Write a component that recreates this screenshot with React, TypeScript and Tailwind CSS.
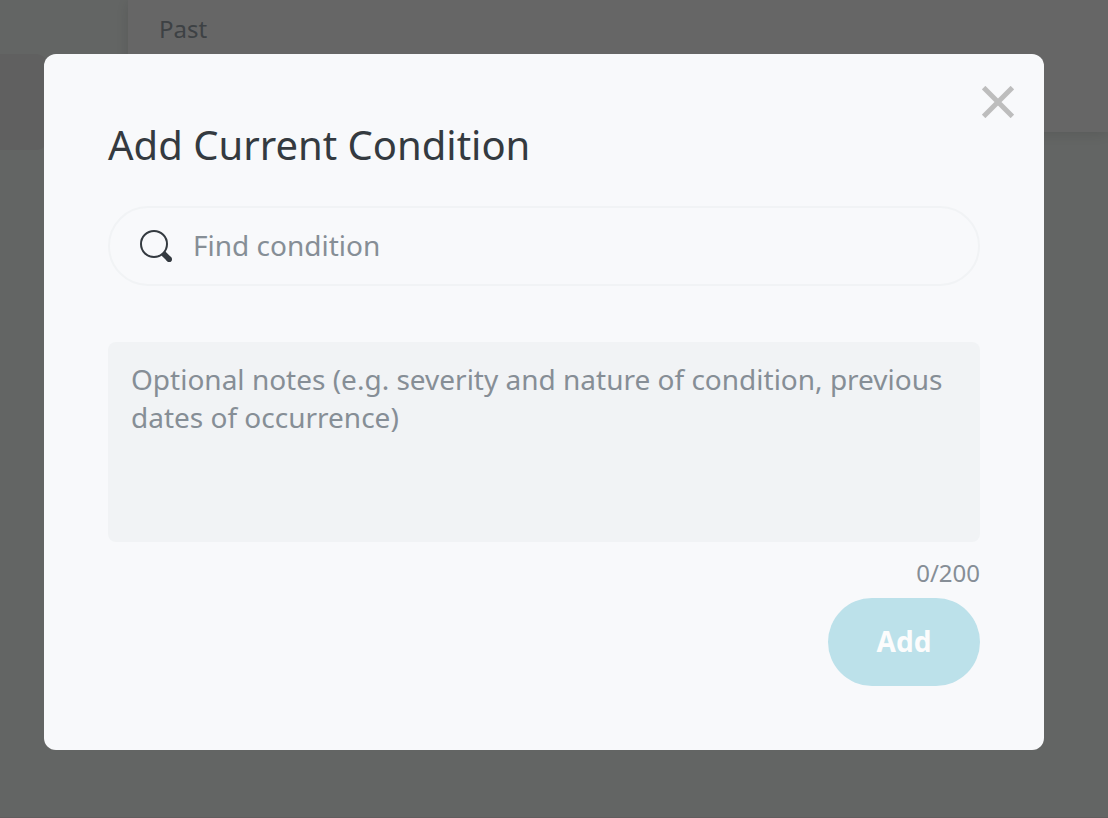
import { useState } from "react";

const MAX_NOTES = 200;

const CloseIcon = () => (
  <svg viewBox="0 0 32 32" className="size-8" fill="none" aria-hidden="true">
    <path d="M1.6 1.6 30.4 30.4M30.4 1.6 1.6 30.4" stroke="#bdbdbd" strokeWidth="5" />
  </svg>
);

const SearchIcon = () => (
  <svg viewBox="0 0 32 32" className="size-8 shrink-0" fill="none" aria-hidden="true">
    <circle cx="14" cy="14" r="13" stroke="#343a40" strokeWidth="2" />
    <path d="M23.4 23.6 29.2 29.2" stroke="#343a40" strokeWidth="5.6" />
    <circle cx="29.2" cy="29.2" r="2.8" fill="#343a40" />
  </svg>
);

// The page that sits behind the dialog
const PageBehind = () => {
  return (
    <div className="flex min-h-screen border-b border-[#f0e8ea] bg-[#f8fdfa]">
      <aside className="w-32 shrink-0 pt-[54px]">
        <div className="mr-20 h-24 rounded-r-xl bg-[#efefef]"></div>
      </aside>
      <main className="grow">
        <section className="h-33 bg-white pt-3 pl-[31px] shadow-[0_2px_14px_rgba(0,0,0,0.12)]">
          <h3 className="text-2xl leading-[34px] text-[#9aa3ab]">Past</h3>
        </section>
      </main>
    </div>
  );
};

const AddConditionDialog = () => {
  const [condition, setCondition] = useState("");
  const [notes, setNotes] = useState("");

  return (
    <div
      role="dialog"
      aria-modal="true"
      aria-labelledby="dialog-title"
      className="relative w-full max-w-[1000px] rounded-xl bg-[#f8f9fb] p-16"
    >
      <button type="button" aria-label="Close" className="absolute top-8 right-[30px] cursor-pointer">
        <CloseIcon />
      </button>
      <h2 id="dialog-title" className="text-[40px] leading-[54px] text-[#343a40]">
        Add Current Condition
      </h2>
      <label className="mt-[34px] flex h-20 items-center gap-[21px] rounded-full border-2 border-[#f1f3f5] px-[30px]">
        <SearchIcon />
        <input
          type="text"
          aria-label="Find condition"
          placeholder="Find condition"
          value={condition}
          onChange={(e) => setCondition(e.target.value)}
          className="w-full min-w-0 bg-transparent pb-0.5 text-[28px] text-[#343a40] outline-none placeholder:text-[#868e96]"
        />
      </label>
      <textarea
        aria-label="Optional notes"
        placeholder="Optional notes (e.g. severity and nature of condition, previous dates of occurrence)"
        maxLength={MAX_NOTES}
        value={notes}
        onChange={(e) => setNotes(e.target.value)}
        className="mt-14 block h-50 w-full resize-none rounded-lg bg-[#f1f3f5] px-[23px] py-[18px] text-[28px] leading-[38px] text-[#343a40] outline-none placeholder:text-[#868e96]"
      />
      <p className="mt-[14px] mb-2 text-right text-2xl leading-[34px] text-[#868e96]">
        {notes.length}/{MAX_NOTES}
      </p>
      <button
        type="button"
        className="ml-auto block h-22 min-w-38 cursor-pointer rounded-full bg-[#bce1ea] px-12 pb-0.5 text-[28px] font-bold text-[#fcfcfc]"
      >
        Add
      </button>
    </div>
  );
};

export default function App() {
  return (
    <div className="font-['Noto_Sans',sans-serif]">
      <PageBehind />
      <div className="fixed inset-0 flex items-start justify-center overflow-auto bg-black/60 pt-[54px] pr-16 pb-16 pl-11">
        <AddConditionDialog />
      </div>
    </div>
  );
}
